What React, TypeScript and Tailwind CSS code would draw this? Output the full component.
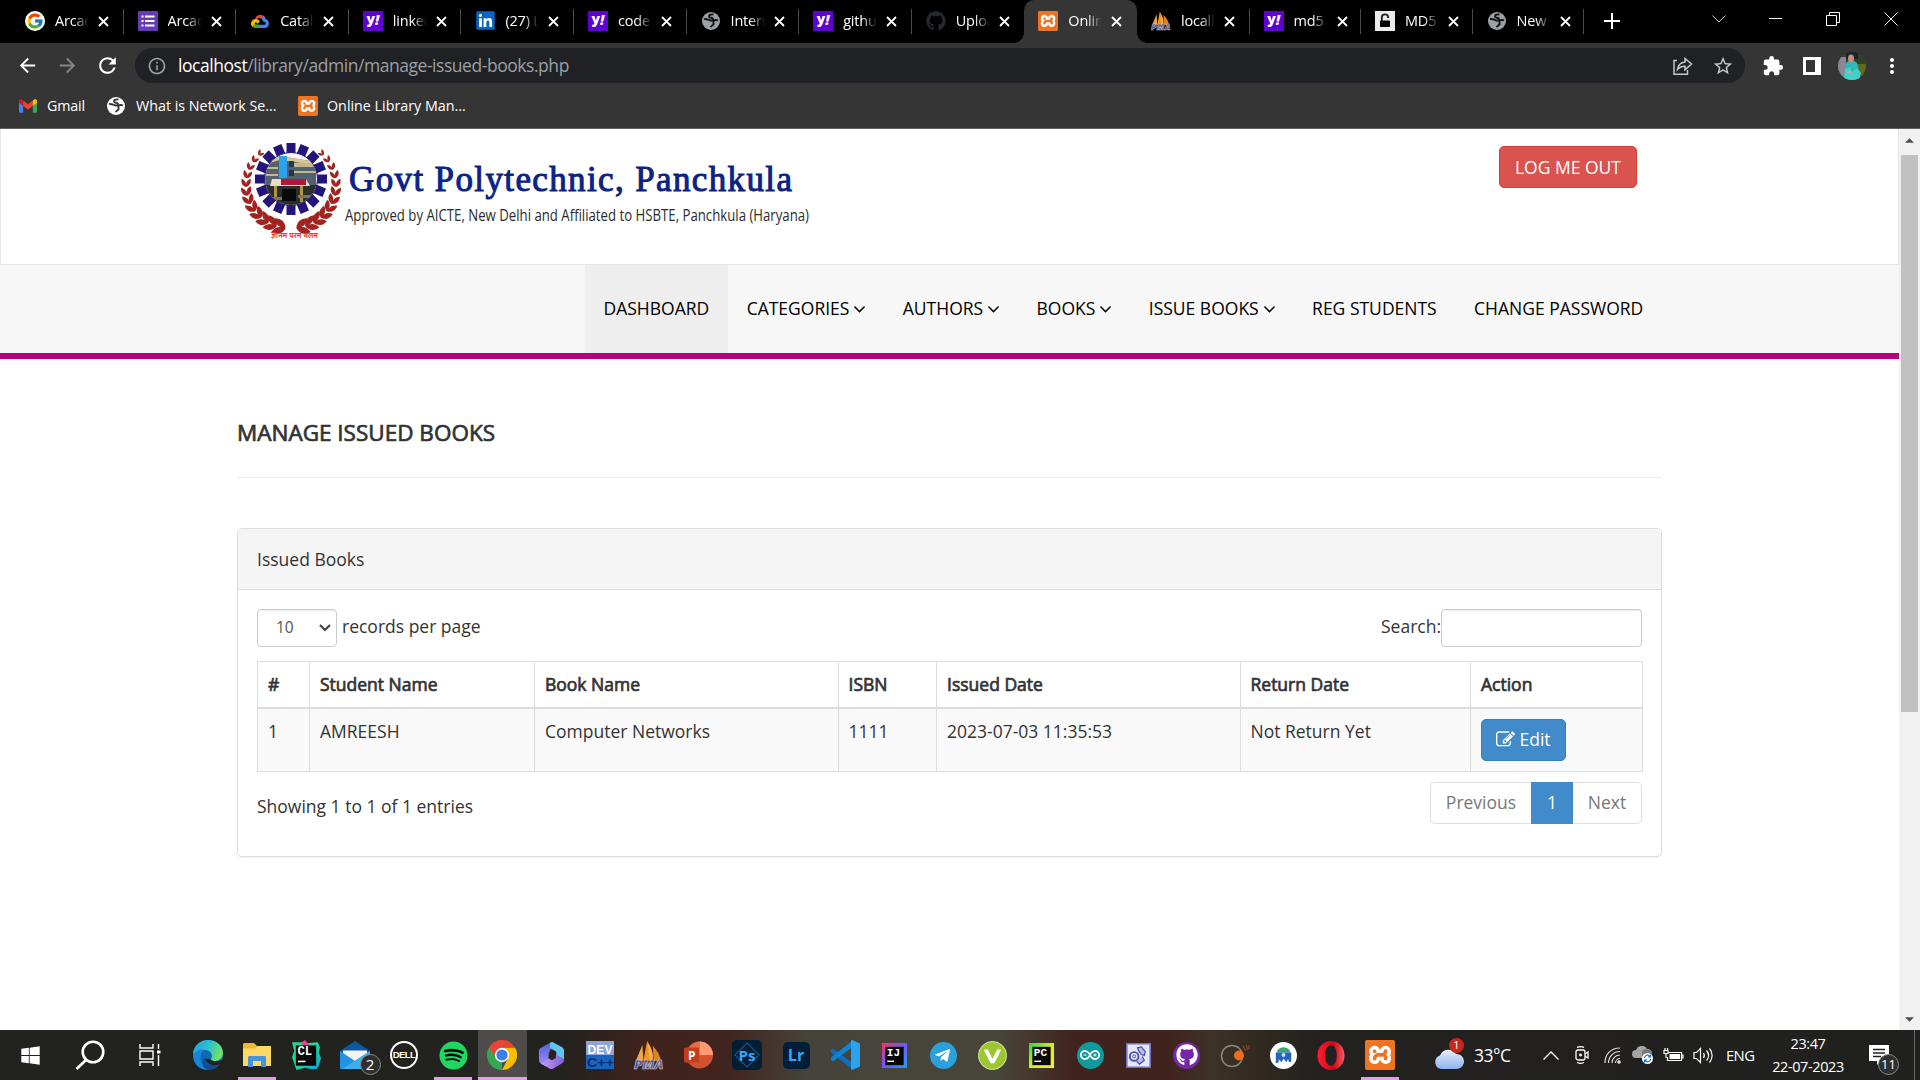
import React from "react";
import { FcGoogle } from "react-icons/fc";
import { FaLinkedin, FaGithub, FaSpotify, FaWindows, FaTelegramPlane } from "react-icons/fa";
import { MdExtension, MdStarBorder, MdArrowBack, MdArrowForward, MdRefresh, MdInfoOutline, MdMoreVert } from "react-icons/md";
import { SiXampp, SiArduino } from "react-icons/si";

type Kids = { children?: React.ReactNode };

/* ---------- shared marks ---------- */

const Xampp = ({ big = false }: { big?: boolean }) => (
  <span className={`flex shrink-0 items-center justify-center rounded-[2px] bg-[#e8701f] p-[2px] ${big ? "size-[30px]" : "size-5"}`}>
    <span className="flex size-full items-center justify-center bg-white">
      <SiXampp className={`shrink-0 text-[#ee7322] ${big ? "size-[30px]" : "size-5"}`} />
    </span>
  </span>
);

const Yahoo = () => (
  <span className="flex size-5 items-center justify-center bg-[#5f01d1] font-['Open_Sans',sans-serif] text-[14px] leading-none font-extrabold text-white">
    <span className="-mt-1">y</span>
    <span className="-mt-0.5 italic">!</span>
  </span>
);

const Sails = ({ big = false }: { big?: boolean }) => (
  <svg viewBox="0 0 32 32" className={big ? "h-[30px] w-8" : "size-5"}>
    <path d="M2 22 9 5l1 17z" fill="#e9a64c" />
    <path d="M10 22 14 1l4 21z" fill="#f6921e" />
    <path d="M14 1c5 8 7 14 6 21h-3z" fill="#fbb04c" />
    <path d="M20 6c5 5 8 11 9 17l-8-1z" fill="#d9832b" />
    <text x="0" y="31" fontFamily="Open Sans, sans-serif" fontWeight="800" fontStyle="italic" fontSize="13" textLength="31" lengthAdjust="spacingAndGlyphs" fill="#4a4a7c" stroke="#c9c9df" strokeWidth=".7">PMA</text>
  </svg>
);

const Globe = ({ light = false }: { light?: boolean }) => (
  <svg viewBox="0 0 20 20" className="size-5">
    <circle cx="10" cy="10" r="9" fill={light ? "#ffffff" : "#9aa0a6"} />
    <path d="M12.500 3.500c-3-.5-5.300.8-4.200 2.500.8 1.100 3.700.4 3.700 2 0 1.400-1.600 1.700-3.200 1.300C6.500 8.600 5 7.500 3 8.200M17 9.500c-2-1-4-.6-4.500.8-.6 1.500.8 2.300-.2 3.400-.8 1-2 .8-2.500 2.500" fill="none" stroke={light ? "#35363a" : "#101010"} strokeWidth="1.900" />
  </svg>
);

const CloudLogo = () => (
  <svg viewBox="0 0 24 24" className="size-5">
    <path d="M6 10a6.500 6.500 0 0 1 11-3.500l-3 3A4 4 0 0 0 8 10z" fill="#ea4335" />
    <path d="M16 5.500A7 7 0 0 1 19 10a5.400 5.400 0 0 1-1.500 10.500H12v-4h5.500a1.700 1.700 0 0 0 .3-3.300L15.500 12.500c0-1.400-.5-2.300-1.500-3z" fill="#4285f4" />
    <path d="M12 16.500v4H6.500A5.500 5.500 0 0 1 3 19l3-3z" fill="#34a853" />
    <path d="M6 16 3 19.300A5.700 5.700 0 0 1 7 9.500c2.300 0 4 1.300 4.700 3.200l-3.200 3C8.300 12.900 5 13.500 6 16z" fill="#fbbc04" />
  </svg>
);

const FormsLogo = () => (
  <svg viewBox="0 0 20 20" className="size-5">
    <rect width="20" height="20" rx="1" fill="#673ab7" />
    <path d="M3.500 5.500h2M7 5.500h9.500M3.500 10h2M7 10h9.500M3.500 14.500h2M7 14.500h9.500" stroke="#fff" strokeWidth="2.200" />
  </svg>
);

const Padlock = () => (
  <svg viewBox="0 0 20 20" className="size-5">
    <rect width="20" height="20" fill="#ececec" />
    <path d="M6.800 10V6.500a3.200 3.200 0 0 1 6.400 0V7" fill="none" stroke="#222" strokeWidth="1.800" />
    <rect x="5" y="9.500" width="10" height="6.500" rx=".8" fill="#000" />
  </svg>
);

const Gmail = () => (
  <svg viewBox="0 0 20 15" className="h-[14px] w-[18px]">
    <path d="M0 2v11.500c0 .8.700 1.500 1.500 1.500H4.600V6z" fill="#4285f4" />
    <path d="M20 2v11.500c0 .8-.7 1.500-1.500 1.500h-3.100V6z" fill="#34a853" />
    <path d="M4.600 7.500v-6L10 5.600l5.400-4.100v6L10 11.500z" fill="#ea4335" />
    <path d="M0 2C0 .3 1.900-.5 3.200.4l1.400 1.100v6L0 4z" fill="#c5221f" />
    <path d="M20 2c0-1.700-1.900-2.500-3.200-1.600l-1.400 1.100v6L20 4z" fill="#fbbc04" />
  </svg>
);

/* ---------- browser frame ---------- */

const tabs: { title: string; icon: React.ReactNode; active?: boolean; noLine?: boolean; narrow?: boolean }[] = [
  { title: "Arcad", icon: <span className="flex size-5 items-center justify-center rounded-full bg-white"><FcGoogle className="size-[18px]" /></span> },
  { title: "Arcad", icon: <FormsLogo /> },
  { title: "Catalo", icon: <CloudLogo /> },
  { title: "linked", icon: <Yahoo /> },
  { title: "(27) Li", icon: <span className="flex size-[17px] items-center justify-center bg-white"><FaLinkedin className="size-[21px] shrink-0 text-[#0a66c2]" /></span> },
  { title: "code", icon: <Yahoo /> },
  { title: "Intern", icon: <Globe /> },
  { title: "githu", icon: <Yahoo /> },
  { title: "Uploa", icon: <FaGithub className="size-5 text-[#24292e]" />, noLine: true },
  { title: "Onlin", icon: <Xampp />, active: true, noLine: true },
  { title: "localh", icon: <Sails /> },
  { title: "md5", icon: <Yahoo />, narrow: true },
  { title: "MD5", icon: <Padlock />, narrow: true },
  { title: "New", icon: <Globe />, narrow: true },
];

const TabStrip = () => (
  <div className="flex h-[43px] shrink-0 bg-black pl-[11px]">
    {tabs.map((t, i) => (
      <div key={i} className={`relative flex shrink-0 items-center pl-3.5 ${t.narrow ? "w-[111.500px]" : "w-[112.600px]"} ${t.active ? "rounded-t-[10px] bg-[#353535]" : ""}`}>
        {t.active && (
          <>
            <span className="absolute bottom-0 -left-2.5 size-2.5 bg-[radial-gradient(circle_at_0_0,#000_9.500px,#353535_10px)]" />
            <span className="absolute -right-2.5 bottom-0 size-2.5 bg-[radial-gradient(circle_at_100%_0,#000_9.500px,#353535_10px)]" />
          </>
        )}
        <span className="-mt-0.5 flex w-5 shrink-0 justify-center">{t.icon}</span>
        <span className="-mt-0.5 ml-[10px] w-[34px] overflow-hidden text-[14.500px] tracking-[-0.2px] whitespace-nowrap text-white [mask-image:linear-gradient(to_right,#000_55%,transparent_100%)]">{t.title}</span>
        <svg viewBox="0 0 11 11" className="-mt-px ml-[9px] size-[11px]" stroke="#fff" strokeWidth="1.800"><path d="m1 1 9 9M10 1l-9 9" /></svg>
        {!t.noLine && <span className="absolute top-[9px] right-0 h-[25px] w-px bg-[#4b4c4f]" />}
      </div>
    ))}
    <svg viewBox="0 0 16 16" className="mt-[13px] ml-[20px] size-4" stroke="#fff" strokeWidth="2"><path d="M8 0v16M0 8h16" /></svg>
    <div className="ml-auto flex h-[37px] items-center">
      <svg viewBox="0 0 14 8" className="mr-[43px] h-2 w-3.5" fill="none" stroke="#ccc"><path d="m.5.500 6.500 6.500L13.500.5" /></svg>
      <span className="mr-11 h-px w-[13px] bg-white" />
      <svg viewBox="0 0 14 14" className="mr-11 size-3.5" fill="none" stroke="#fff"><path d="M.5 3.500h10v10H.5zM3.500 3V.500h10v10H11" /></svg>
      <svg viewBox="0 0 14 14" className="mr-[22px] size-3.5" stroke="#fff"><path d="m.5.500 13 13M13.500.5l-13 13" /></svg>
    </div>
  </div>
);

const Toolbar = () => (
  <div className="flex h-[45px] shrink-0 items-center bg-[#353535]">
    <MdArrowBack className="ml-[16px] size-[23px] text-white" />
    <MdArrowForward className="ml-[17px] size-[23px] text-[#858585]" />
    <MdRefresh className="ml-[16px] size-[25px] text-white" />
    <div className="ml-[15px] flex h-[35px] w-[1610px] items-center rounded-full bg-[#202124]">
      <MdInfoOutline className="ml-[12px] size-5 text-[#9aa0a6]" />
      <span className="ml-[11px] text-[17.500px] tracking-[-0.45px] text-[#9aa0a6]"><span className="text-white">localhost</span>/library/admin/manage-issued-books.php</span>
      <svg viewBox="0 0 20 18" className="ml-auto h-[18px] w-5" fill="none" stroke="#c4c7c9" strokeWidth="1.500">
        <path d="M4 3.500H1v13.700h13.500V13M12 1.500V5C7 5.500 5 8.500 4.500 12.500 6.500 10 9 9.300 12 9.300v3.500L18.500 7z" />
      </svg>
      <MdStarBorder className="mr-[11px] ml-[19px] size-[22px] text-[#c4c7c9]" />
    </div>
    <MdExtension className="ml-[17px] size-[22px] text-white" />
    <span className="ml-[19px] box-border h-[18px] w-[18px] border-3 border-r-[6px] border-white" />
    <svg viewBox="0 0 28 28" className="ml-[17px] size-7">
      <clipPath id="face"><circle cx="14" cy="14" r="14" /></clipPath>
      <g clipPath="url(#face)">
        <rect width="28" height="28" fill="#354026" />
        <path d="M0 5h8v23H0z" fill="#8d8698" />
        <path d="M18 12h10v12H18z" fill="#5c6c1c" />
        <path d="M8 0h12v7H8z" fill="#1c2230" />
        <path d="M8 11c3-3 8-3 11 0l4 17H5z" fill="#2cb9b8" />
        <path d="m7 17 5-2 2 5 5-4 4 5-2 7H6z" fill="#42d0cc" />
        <ellipse cx="13" cy="6.500" rx="3" ry="4" fill="#c58e80" />
        <path d="M9 19h4v2H9z" fill="#d9a08a" />
      </g>
    </svg>
    <MdMoreVert className="ml-[14px] size-6 text-white" />
  </div>
);

const Bookmarks = () => (
  <div className="flex h-[41px] shrink-0 items-center border-b border-[#606060] bg-[#353535] pb-1 pl-[19px] text-[14.300px] text-white">
    <Gmail />
    <span className="ml-2.5 w-[59px] tracking-[-0.2px]">Gmail</span>
    <Globe light />
    <span className="ml-2.5 w-[162px] whitespace-nowrap">What is Network Se...</span>
    <Xampp />
    <span className="ml-[9px] whitespace-nowrap">Online Library Man...</span>
  </div>
);

/* ---------- library site ---------- */

const teeth = Array.from({ length: 16 }, (_, i) => i * 22.5);
const leaves = Array.from({ length: 12 }, (_, i) => i);

const Wreath = () => (
  <g>
    {leaves.map((i) => {
      const a = ((228 - i * 11.2) * Math.PI) / 180;
      const x = 50 + 44 * Math.cos(a);
      const y = 46 + 43 * Math.sin(a);
      const s = 0.36 + i * 0.047;
      return (
        <g key={i} transform={`translate(${x} ${y}) rotate(${46 - i * 11.2}) scale(${s})`}>
          <path d="M0 8C-7 6-10 0-8-7-3-5 0-1 0 3 0-1 3-5 8-7 10 0 7 6 0 8Z" fill="#a3231f" />
        </g>
      );
    })}
  </g>
);

const SchoolLogo = () => (
  <svg viewBox="0 0 580 110" className="h-[110px] w-[580px]" role="img" aria-label="Govt Polytechnic, Panchkula">
    <g transform="translate(2 6)">
      <Wreath />
      <g transform="translate(102 0) scale(-1 1)"><Wreath /></g>
      {teeth.map((d) => (
        <rect key={d} x="46.500" y="4" width="9" height="10.500" fill="#25157a" transform={`rotate(${d} 51 40)`} />
      ))}
      <circle cx="51" cy="40" r="26.500" fill="#f5f5f8" stroke="#25157a" strokeWidth="1" />
      <clipPath id="disc"><circle cx="51" cy="40" r="26" /></clipPath>
      <g clipPath="url(#disc)">
        <path d="M22 24 40 17l36 6v24H22z" fill="#53606d" />
        <path d="M26 21 40 17l36 6v3l-36-5-14 4z" fill="#d8c690" />
        <path d="M54 24h22v4H54zM54 32h22v2H54zM26 28h12v2H26zM26 35h12v2H26z" fill="#c4b78a" />
        <path d="M39 17h8v22h-8z" fill="#2ba3ea" />
        <path d="M49 22h5v6h-5zM49 31h5v6h-5z" fill="#25364a" />
        <path d="M22 46h58v22H22z" fill="#2a2f2a" />
        <path d="M32 40h34l4 7H30z" fill="#eadcc0" />
        <path d="M41 40h25v6H41z" fill="#b3163c" />
        <path d="M34 47h3v16h-3zM60 47h3v16h-3z" fill="#b09348" />
        <path d="M42 50h14v12H42z" fill="#08090b" />
        <path d="M28 58h14v3H28zM58 56h14v3H58z" fill="#7a7460" />
      </g>
      <text x="31" y="99" textLength="47" lengthAdjust="spacingAndGlyphs" fontFamily="Noto Sans, sans-serif" fontSize="8" fontWeight="600" fill="#ee2a2c">ज्ञानम परमं बलम</text>
    </g>
    <text x="111" y="57.500" textLength="443" lengthAdjust="spacing" fontFamily="Liberation Serif, serif" fontSize="35" fontWeight="400" fill="#0b2385" stroke="#0b2385" strokeWidth="1">Govt Polytechnic, Panchkula</text>
    <text x="107" y="87.500" textLength="464" lengthAdjust="spacingAndGlyphs" fontFamily="Open Sans, sans-serif" fontSize="17" fontWeight="500" fill="#2b2b2b">Approved by AICTE, New Delhi and Affiliated to HSBTE, Panchkula (Haryana)</text>
  </svg>
);

const AngleDown = () => (
  <svg viewBox="400 640 992 640" className="mt-0.5 ml-[5px] h-[7px] w-[11px]" fill="currentColor">
    <path d="M1395 736q0 13-10 23l-466 466q-10 10-23 10t-23-10l-466-466q-10-10-10-23t10-23l50-50q10-10 23-10t23 10l393 393 393-393q10-10 23-10t23 10l50 50q10 10 10 23z" />
  </svg>
);

const EditIcon = () => (
  <svg viewBox="0 0 1792 1792" className="size-[19px]" fill="currentColor">
    <path d="M888 1184l116-116-152-152-116 116v56h96v96h56zm440-720q-16-16-33 1l-350 350q-17 17-1 33t33-1l350-350q17-17 1-33zm80 594v190q0 119-84.500 203.500t-203.500 84.500h-832q-119 0-203.500-84.500t-84.500-203.500v-832q0-119 84.500-203.500t203.500-84.500h832q63 0 117 25 15 7 18 23 3 17-9 29l-49 49q-14 14-32 8-23-6-45-6h-832q-66 0-113 47t-47 113v832q0 66 47 113t113 47h832q66 0 113-47t47-113v-126q0-13 9-22l64-64q15-15 35-7t20 29zm-96-738l288 288-672 672h-288v-288zm444 132l-92 92-288-288 92-92q28-28 68-28t68 28l152 152q28 28 28 68t-28 68z" />
  </svg>
);

const nav: [string, boolean][] = [
  ["DASHBOARD", false],
  ["CATEGORIES", true],
  ["AUTHORS", true],
  ["BOOKS", true],
  ["ISSUE BOOKS", true],
  ["REG STUDENTS", false],
  ["CHANGE PASSWORD", false],
];

const columns: [string, string][] = [
  ["#", "1"],
  ["Student Name", "AMREESH"],
  ["Book Name", "Computer Networks"],
  ["ISBN", "1111"],
  ["Issued Date", "2023-07-03 11:35:53"],
  ["Return Date", "Not Return Yet"],
  ["Action", ""],
];

const grid = "grid grid-cols-[52px_225px_303.500px_98.500px_303.500px_230.500px_172px]";
const faux = "font-normal [-webkit-text-stroke:0.7px_#333]";

const Page = () => (
  <div className="flex min-h-0 flex-1 bg-white font-['Open_Sans',sans-serif] text-[17.500px] text-[#333]">
    <div className="flex min-w-0 flex-1 flex-col">
      <header className="flex h-[136px] shrink-0 justify-between border border-t-0 border-[#e7e7e7] pr-[261px] pl-[237px]">
        <div className="pt-1"><SchoolLogo /></div>
        <button className="mt-[17px] flex h-[42px] w-[138px] items-center justify-center rounded-[5px] border border-[#d43f3a] bg-[#d9534f] text-white">LOG ME OUT</button>
      </header>
      <nav className="flex h-[94px] shrink-0 justify-end border-b-6 border-[#b8007f] bg-[#f7f7f7] pr-[237px] text-black">
        {nav.map(([label, caret], i) => (
          <a key={label} className={`flex items-center px-[18.700px] pb-0.5 text-[17.500px] ${i === 0 ? "bg-[#eee]" : ""}`}>
            {label}
            {caret && <AngleDown />}
          </a>
        ))}
      </nav>
      <main className="px-[237px] pt-[56px]">
        <h4 className={`flex h-[35px] items-center text-[22.500px] ${faux}`}>MANAGE ISSUED BOOKS</h4>
        <div className="mt-[27px] h-px bg-[#eee]" />
        <section className="mt-[50px] h-[329px] rounded-[5px] border border-[#ddd] shadow-[0_1px_1px_rgba(0,0,0,0.05)]">
          <h5 className="flex h-[61px] items-center rounded-t-[4px] border-b border-[#ddd] bg-[#f5f5f5] px-[19px]">Issued Books</h5>
          <div className="px-[19px] pt-[19px]">
            <div className="flex justify-between">
              <div className="flex items-center">
                <span className="flex h-[38px] w-20 items-center justify-between rounded-[4px] border border-[#ccc] pr-[5px] pl-[18px] text-[15.500px] text-[#555] shadow-[inset_0_1px_1px_rgba(0,0,0,0.075)]">
                  10
                  <svg viewBox="0 0 12 8" className="h-2 w-3" fill="none" stroke="#444" strokeWidth="2.200"><path d="m1 1 5 5 5-5" /></svg>
                </span>
                <span className="-mt-1 ml-[5px]">records per page</span>
              </div>
              <div className="flex items-center">
                <span className="-mt-1">Search:</span>
                <span className="h-[38px] w-[201px] rounded-[4px] border border-[#ccc] shadow-[inset_0_1px_1px_rgba(0,0,0,0.075)]" />
              </div>
            </div>
            <div className="mt-3.5 w-[1386px] border-t border-l border-[#ddd]">
              <div className={grid}>
                {columns.map(([h]) => (
                  <div key={h} className={`flex h-[47px] items-center border-r border-b-2 border-[#ddd] pl-2.5 ${faux}`}>{h}</div>
                ))}
              </div>
              <div className={grid}>
                {columns.map(([h, v]) => (
                  <div key={h} className="h-[63px] border-r border-b border-[#ddd] bg-[#f9f9f9] pt-2.5 pl-2.5 leading-[25px]">
                    {v || (
                      <button className="flex h-[42px] w-[85px] items-center justify-center gap-1 rounded-[5px] border border-[#357ebd] bg-[#428bca] pb-0.5 text-white">
                        <EditIcon /> Edit
                      </button>
                    )}
                  </div>
                ))}
              </div>
            </div>
            <div className="mt-2.5 flex justify-between">
              <span className="mt-[11px]">Showing 1 to 1 of 1 entries</span>
              <div className="flex h-[42px] text-[#777]">
                <span className="flex w-[101px] items-center justify-center rounded-l-[5px] border border-r-0 border-[#ddd] pb-0.5">Previous</span>
                <span className="flex w-[42px] items-center justify-center bg-[#428bca] pb-0.5 text-white">1</span>
                <span className="flex w-[69px] items-center justify-center rounded-r-[5px] border border-l-0 border-[#ddd] pb-0.5">Next</span>
              </div>
            </div>
          </div>
        </section>
      </main>
    </div>
    <aside className="flex w-[21px] shrink-0 flex-col items-center bg-[#f1f1f1]">
      <svg viewBox="0 0 10 5" className="mt-[9px] h-[5px] w-[9px]" fill="#505050"><path d="M0 5 5 0l5 5z" /></svg>
      <span className="mt-3 h-[557px] w-[17px] bg-[#c1c1c1]" />
      <svg viewBox="0 0 10 5" className="mt-auto mb-2 h-[5px] w-[9px]" fill="#505050"><path d="m0 0 5 5 5-5z" /></svg>
    </aside>
  </div>
);

/* ---------- taskbar ---------- */

const Slot = ({ children, line, active, narrow }: Kids & { line?: boolean; active?: boolean; narrow?: boolean }) => (
  <div className={`relative flex shrink-0 items-center justify-center ${narrow ? "w-[48.200px]" : "w-[49px]"} ${active ? "bg-[#4d4c4b]" : ""}`}>
    {children}
    {line && <span className={`absolute bottom-0 h-[3px] bg-[#e69bee] ${active ? "w-full" : "w-[38px]"}`} />}
  </div>
);

const Badge = ({ children }: Kids) => (
  <span className="absolute top-[24px] left-[29px] flex size-[21px] items-center justify-center rounded-full border border-[#8a8a8a] bg-[#2f2f2f] text-[15px] leading-none text-white">{children}</span>
);

const Jet = ({ code, from, mid, to }: { code: string; from: string; mid: string; to: string }) => (
  <svg viewBox="0 0 28 28" className={code === "CL" ? "size-[30px]" : "size-[27px]"}>
    <defs>
      <linearGradient id={`jet${code}`} x1="0" y1="0" x2="1" y2="1"><stop offset="0" stopColor={from} /><stop offset=".5" stopColor={mid} /><stop offset="1" stopColor={to} /></linearGradient>
    </defs>
    {code === "CL" ? (
      <>
        <path d="m1 2 9 0 5 1 10-1 2 5-1 5 2 5-2 7-2 3-6 0-5-1-8 2-2-6-2-6 2-6z" fill={`url(#jet${code})`} />
        <path d="m10 2 3-2 4 5h-6z" fill="#ef3f8f" />
      </>
    ) : (
      <path d="M1 1h26v26H1z" fill={`url(#jet${code})`} />
    )}
    <path d="M4.500 5h19v19h-19z" fill="#060606" />
    <text x="6" y="14" fontFamily="Liberation Mono, monospace" fontWeight="700" fontSize="11.500" fill="#fff">{code}</text>
    <path d="M6.500 20h7" stroke="#fff" strokeWidth="1.500" />
  </svg>
);

const Taskbar = () => (
  <footer className="flex h-[50px] shrink-0 bg-[linear-gradient(90deg,#22221f_0,#22221f_29%,#41231d_34%,#40241f_38%,#46433a_42%,#48453a_52%,#41231d_56%,#41231d_61%,#3c3228_63%,#2e281f_66%,#22211f_69%,#20201f_100%)] text-white">
    <div className="flex w-[183.500px] shrink-0 items-center">
      <FaWindows className="ml-5 size-[21px]" />
      <svg viewBox="0 0 30 30" className="ml-[34px] size-[30px]" fill="none" stroke="#fff" strokeWidth="2.600"><circle cx="18" cy="12" r="10.300" /><path d="M11 20 1.500 29" /></svg>
      <svg viewBox="0 0 22 22" className="ml-[34px] size-[22px]" fill="none" stroke="#fff" strokeWidth="1.400"><path d="M1 0v4h13V0M1 22v-4h13v4M1 7h13v8H1zM19.500 0v5M19.500 11v11" /><path d="M18 6.500h3.500v3H18z" fill="#fff" stroke="none" /></svg>
    </div>
    <Slot>
      <svg viewBox="0 0 30 30" className="size-[30px]">
        <defs>
          <linearGradient id="edgeA" x1="0" y1="0" x2="1" y2=".3"><stop offset="0" stopColor="#1ca0e8" /><stop offset=".6" stopColor="#2fc5c5" /><stop offset="1" stopColor="#6fe06a" /></linearGradient>
        </defs>
        <circle cx="15" cy="15" r="15" fill="#1266b4" />
        <path d="M0 15C0 6 7 0 15 0c9 0 15 6 15 13 0 5-4 8-8 8-3 0-4.500-1-4-2 2-3 1-8-5-9C8 9.500 2 12 0 15z" fill="url(#edgeA)" />
        <path d="M0 15c2-4 7-6 11-5.500C6 14 6 24 14 29.900 6 30 0 23 0 15z" fill="#1785d8" />
        <path d="M12 17c-1 6 5 10 14 7-3 4-7 6-11 6C8 27 8 20 12 17z" fill="#0f4e96" />
        <path d="M17.500 19.500c2 2.500 7 2 11 .5l1 2-3 2.500c-6 2-13 0-14.500-6z" fill="#22221f" />
      </svg>
    </Slot>
    <Slot line>
      <svg viewBox="0 0 28 24" className="h-6 w-7"><path d="M0 1.500C0 .7.700 0 1.500 0H11l3 3h13v20H0z" fill="#f2b632" /><path d="M0 5.500h12L15 3h13v20H0z" fill="#ffd868" /><path d="M5 24V14.500c0-1 .7-1.500 1.500-1.500h15c.8 0 1.500.5 1.500 1.500V24h-5v-6h-8v6z" fill="#4694dc" /></svg>
    </Slot>
    <Slot><Jet code="CL" from="#21d789" mid="#1fd8a0" to="#0b9ed9" /></Slot>
    <Slot>
      <svg viewBox="0 0 30 28" className="h-7 w-[30px]"><path d="M0 10 15 0l15 10v18H0z" fill="#0c59a4" /><path d="M3 9.500h24V20H3z" fill="#f4f4f4" /><path d="m0 10 15 10L30 10v18H0z" fill="#2493e0" /><path d="M30 10v18H2z" fill="#3bb0ee" /></svg>
      <Badge>2</Badge>
    </Slot>
    <Slot><span className="flex size-7 items-center justify-center rounded-full border-2 border-white font-['Liberation_Sans',sans-serif] text-[9.500px] font-bold tracking-[-0.6px]">DELL</span></Slot>
    <Slot line><span className="flex size-[26px] items-center justify-center rounded-full bg-black"><FaSpotify className="size-[29px] shrink-0 text-[#1ed760]" /></span></Slot>
    <Slot line active>
      <svg viewBox="0 0 30 30" className="size-[30px]">
        <path d="M15 15 2 7.500A15 15 0 0 0 15 30z" fill="#34a853" /><path d="M15 30A15 15 0 0 0 28 7.500H15V15l6 3.500z" fill="#fbbc04" />
        <path d="M2 7.500A15 15 0 0 1 28 7.500H15l-6 10z" fill="#ea4335" />
        <circle cx="15" cy="15" r="7.200" fill="#fff" /><circle cx="15" cy="15" r="5.600" fill="#3b7ded" />
      </svg>
    </Slot>
    <Slot>
      <svg viewBox="0 0 28 30" className="h-[29px] w-[27px]" fill="none">
        <defs>
          <linearGradient id="m365" x1="0" y1="0" x2="1" y2="0"><stop offset="0" stopColor="#c79bf5" /><stop offset="1" stopColor="#7a63d8" /></linearGradient>
          <linearGradient id="m365l" x1="0" y1="0" x2="0" y2="1"><stop offset="0" stopColor="#4a63d8" /><stop offset="1" stopColor="#a58cf0" /></linearGradient>
        </defs>
        <path d="M14 1 3 7C1.600 8 1 9 1 10.500v9c0 2 .6 3 2 3.800l5 2.700 4-4V11c0-2 2-3 4-3z" fill="url(#m365l)" />
        <path d="m13 1.500 2-.5 10 5.500c1.500.8 2 2 2 3.500v9l-8-4v-4l-6-3.500c-1.500-2 0-5 0-6z" fill="#62c4f2" />
        <path d="M3 23.500 13 17l6-3 8 5c0 2-.5 3.300-2 4l-9 5.500c-1.400.8-2.600.8-4 0z" fill="url(#m365)" />
        <path d="m11 12.500 3.500-2.500 4 3v4.500l-4 2.500-3.500-2z" fill="#2c211f" />
      </svg>
    </Slot>
    <Slot>
      <svg viewBox="0 0 28 28" className="size-7"><path d="M0 0h28v28H0z" fill="#1964bd" /><path d="M0 0h28v14H0z" fill="#8ea5dc" /><text x="1.500" y="12.500" textLength="25" lengthAdjust="spacingAndGlyphs" fontFamily="Liberation Sans" fontWeight="700" fontSize="13" fill="#fff">DEV</text><text x="1" y="26" textLength="27" lengthAdjust="spacingAndGlyphs" fontFamily="Liberation Sans" fontWeight="700" fontSize="13" fill="#092e6e">C++</text></svg>
    </Slot>
    <Slot><Sails big /></Slot>
    <Slot>
      <svg viewBox="0 0 29 28" className="h-7 w-[29px]"><circle cx="15.500" cy="14" r="13.500" fill="#d35230" /><path d="M15.500.5A13.500 13.500 0 0 1 29 14H15.500z" fill="#ff9a75" /><path d="M15.500.5V14H5V6.500A13.500 13.500 0 0 1 15.500.5z" fill="#ed6c47" /><rect y="6.500" width="15" height="15" rx="1.500" fill="#c43e1c" /><text x="4" y="18.500" fontFamily="Open Sans" fontWeight="700" fontSize="12" fill="#fff">P</text></svg>
    </Slot>
    <Slot><span className="relative flex size-[30px] items-center justify-center rounded-[5px] bg-[#001e36] text-[15px] font-bold text-[#31a8ff]"><span className="absolute size-[18px] rotate-45 border border-[#1c5c8c]" /><span className="relative">Ps</span></span></Slot>
    <Slot><span className="flex size-[27px] items-center justify-center rounded-[5px] bg-[#001e36] text-[16px] font-bold text-[#31a8ff]">Lr</span></Slot>
    <Slot>
      <svg viewBox="0 0 30 30" className="size-[30px]"><path d="m1 10 2-1.600 19 14V29L1 12.500z" fill="#0a6fc0" /><path d="m1 20 2 1.600 19-14V1L1 17.500z" fill="#1082d4" /><path d="M22 0l7 3c.6.300 1 .8 1 1.500v21c0 .7-.4 1.200-1 1.500l-7 3c-1 0-1-1-1-1.500V1.500C21 1 21 0 22 0z" fill="#2ba3ee" /></svg>
    </Slot>
    <Slot><Jet code="IJ" from="#fe315d" mid="#6b57ff" to="#18a0fb" /></Slot>
    <Slot><span className="flex size-[27px] items-center justify-center rounded-full bg-[#2ba0da]"><FaTelegramPlane className="mr-0.5 size-[17px]" /></span></Slot>
    <Slot><svg viewBox="0 0 30 30" className="size-[29px]"><circle cx="15" cy="15" r="14.500" fill="#9cc730" stroke="#d9edaa" /><path d="m6 9 4-.5 5 10 5-10 4 .5-7 14h-4z" fill="#fff" /></svg></Slot>
    <Slot><Jet code="PC" from="#21d74a" mid="#d7e82a" to="#f5f03a" /></Slot>
    <Slot><span className="flex size-[27px] items-center justify-center rounded-full bg-[#0f9aa0]"><SiArduino className="size-[20px]" /></span></Slot>
    <Slot narrow>
      <svg viewBox="0 0 26 26" className="size-[25px]" fill="none" stroke="#4a4fae"><path d="M.8.800h24.400v24.400H.8z" fill="#e6e8f8" stroke="#6a70c8" strokeWidth="1.600" /><circle cx="8.500" cy="14" r="4.500" strokeWidth="2" /><circle cx="8.500" cy="14" r="1.500" /><path d="m12 5 4-1 4 5-1 4-3-1-3-4zM17 14l2 4-5 4-3-3" fill="#b9bdec" strokeWidth="1.300" /></svg>
    </Slot>
    <Slot narrow><span className="flex size-[27px] items-center justify-center rounded-full bg-[#7527a8]"><FaGithub className="size-[22px]" /></span></Slot>
    <Slot narrow><svg viewBox="0 0 30 28" className="h-7 w-[30px]"><circle cx="12" cy="15" r="10.500" fill="none" stroke="#8d8781" strokeWidth="1.500" /><circle cx="19" cy="14.500" r="5" fill="#f36a1c" /><path d="m23 5 3 5M26 4l2 5M29 4v4" stroke="#8a4425" strokeWidth="1.200" /></svg></Slot>
    <Slot narrow><svg viewBox="0 0 28 28" className="size-[27px]"><circle cx="14" cy="14" r="14" fill="#fff" /><path d="M7 11a7 5.500 0 0 1 14 0z" fill="#3ba776" /><path d="M6 11h16v10l-3-1v-3l-2 4-3-4-2 4-3-3v3l-3 1z" fill="#2462c0" /><circle cx="14" cy="13.500" r="2" fill="#cfe0ff" /></svg></Slot>
    <Slot narrow>
      <svg viewBox="0 0 28 30" className="h-[29px] w-7"><defs><linearGradient id="op"><stop offset="0" stopColor="#ff1b2d" /><stop offset=".6" stopColor="#c90a1d" /><stop offset="1" stopColor="#ff5a5f" /></linearGradient></defs><path fillRule="evenodd" d="M14 0c8 0 14 6.500 14 15s-6 15-14 15S0 23.500 0 15 6 0 14 0zm0 4.500c-4 0-6 5-6 10.500s2 10.500 6 10.500 6-5 6-10.500-2-10.500-6-10.500z" fill="url(#op)" /></svg>
    </Slot>
    <Slot line narrow><Xampp big /></Slot>
    <div className="ml-auto flex items-center font-['Open_Sans',sans-serif]">
      <div className="relative mr-[10px]">
        <svg viewBox="0 0 30 22" className="mt-[5px] h-[22px] w-[30px]"><defs><linearGradient id="wx" x2="0" y2="1"><stop offset="0" stopColor="#e8effc" /><stop offset="1" stopColor="#8eb2f0" /></linearGradient></defs><path d="M7 22a7 7 0 0 1-1-13.500A9 9 0 0 1 22 7a7.500 7.500 0 0 1 1 15z" fill="url(#wx)" /></svg>
        <span className="absolute -top-1 left-[15px] flex size-[15px] items-center justify-center rounded-full bg-[#c42b1c] text-[11px]">1</span>
      </div>
      <span className="w-[37px] text-[17.500px] tracking-[-0.5px] whitespace-nowrap">33°C</span>
      <svg viewBox="0 0 16 9" className="ml-[32px] h-[9px] w-4" fill="none" stroke="#fff" strokeWidth="1.300"><path d="m.5 8.500 7.500-7.500 7.500 7.500" /></svg>
      <svg viewBox="0 0 16 18" className="ml-[15px] h-[18px] w-4" fill="none" stroke="#fff" strokeWidth="1.300"><rect x="2" y="4" width="9" height="10" rx="2" /><path d="m11 8 3-2v6l-3-2M3 1.500c2-1 5-1 7 0M3 16.500c2 1 5 1 7 0" /><circle cx="6.500" cy="9" r=".8" /></svg>
      <svg viewBox="0 0 17 17" className="ml-[14px] size-[17px]" fill="none" stroke="#ddd" strokeWidth="1.200"><path d="M1 16C1 7 7 1 16 1M4.500 16C4.500 9.500 9.500 4.500 16 4.500M8 16c0-4.500 3.500-8 8-8M11.500 16c0-2.500 2-4.500 4.500-4.500" /><circle cx="15" cy="15" r="1.200" fill="#fff" /></svg>
      <svg viewBox="0 0 22 18" className="ml-[11px] h-[18px] w-[22px]"><path d="M4 12a4 4 0 0 1 0-8 6 6 0 0 1 11-1 4.500 4.500 0 0 1 1 9z" fill="#a5a5a5" /><path d="M10 6a4 4 0 0 1 6-2 4 4 0 0 1 0 8h-6z" fill="#777" /><circle cx="15.500" cy="12.500" r="5.500" fill="#fff" /><path d="M12.500 12a3 3 0 0 1 5.500-1.500M18.500 13a3 3 0 0 1-5.500 1.500M18.500 8.500v2.500H16M12.500 16.500V14H15" fill="none" stroke="#1571c7" strokeWidth="1.200" /></svg>
      <svg viewBox="0 0 21 14" className="ml-[9px] h-3.5 w-[21px]" fill="none" stroke="#fff" strokeWidth="1.200"><path d="M5 4.500h13.500v8H4.500V9M18.500 7h1.500v3h-1.500" /><path d="M6.500 6H17v5H6.500z" fill="#fff" stroke="none" /><path d="M1 2.500h4v3H1zM3 5.500V10M2 2.500V0M4.500 2.500V0" /></svg>
      <svg viewBox="0 0 21 17" className="ml-[9px] h-[17px] w-[21px]" fill="none" stroke="#fff" strokeWidth="1.200"><path d="M1 5.500h2.500l4-4v14l-4-4H1zM10.500 6c1 1.500 1 3.500 0 5M13.500 3.500c2.500 3 2.500 7 0 10M16.500 1.500c3.500 4 3.500 10 0 14" /></svg>
      <span className="ml-[12px] w-[29px] text-[14.800px] tracking-[-0.6px]">ENG</span>
      <div className="ml-[15px] flex w-[76px] flex-col items-center text-[14.500px] leading-[23px] tracking-[-0.4px] whitespace-nowrap"><span>23:47</span><span>22-07-2023</span></div>
      <div className="relative ml-[23px] h-[50px] w-[45px]">
        <svg viewBox="0 0 20 20" className="mt-[15px] size-5"><path d="M0 0h20v16h-8l-4 4v-4H0z" fill="#fff" /><path d="M4 4.500h12M4 8h12M4 11.500h8" stroke="#222" strokeWidth="1.300" /></svg>
        <span className="absolute top-[24px] left-[9px] flex size-[21px] items-center justify-center rounded-full border border-[#8a8a8a] bg-[#2f2f2f] text-[13px] leading-none">11</span>
      </div>
      <span className="mr-[5px] h-[50px] w-px bg-[#6a6a6a]" />
    </div>
  </footer>
);

export default function App() {
  return (
    <div className="flex h-[1080px] w-[1920px] flex-col overflow-hidden font-['Open_Sans',sans-serif]">
      <TabStrip />
      <Toolbar />
      <Bookmarks />
      <Page />
      <Taskbar />
    </div>
  );
}
